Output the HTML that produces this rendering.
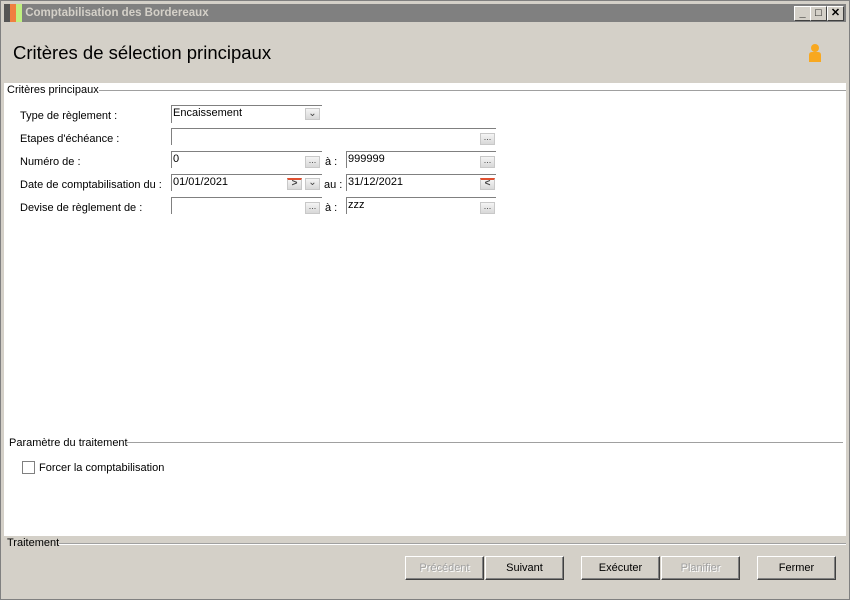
<!DOCTYPE html><html><head><style>
body{margin:0;width:850px;height:600px;background:#d4d0c8;font-family:"Liberation Sans",sans-serif;font-size:11px;position:relative;overflow:hidden}
.a{position:absolute}
.win{left:0;top:0;width:848px;height:598px;border:1px solid #808080;background:#d4d0c8}
.title{left:4px;top:4px;width:842px;height:18px;background:#808080;color:#d4d0c8;font-weight:bold;font-size:11.5px;line-height:18px}
.tb{top:6px;width:15px;height:13px;background:#d4d0c8;border:1px solid;border-color:#fff #404040 #404040 #fff;font-size:11px;line-height:13px;text-align:center;color:#000;font-weight:bold}
.panel{left:4px;top:83px;width:842px;height:453px;background:#fff}
.lbl{font-size:11px;color:#000}
.f{height:17px;background:#fff;border-top:1px solid #808080;border-left:1px solid #808080;line-height:15px;font-size:11px;padding-left:1px;box-sizing:border-box}
.e{width:15px;height:12px;background:linear-gradient(#f4f4f4,#d8d8d8);border:1px solid #c8c8c8;font-size:9px;line-height:6px;text-align:center;color:#444;box-sizing:border-box}
.btn{top:556px;width:79px;height:24px;border:1px solid;border-color:#fff #404040 #404040 #fff;box-shadow:inset -1px -1px #808080;text-align:center;line-height:22px;box-sizing:border-box;font-size:11px}
.dis{color:#a0a0a0;text-shadow:1px 1px #fff}
.line{height:1px;background:#a0a0a0;border-bottom:1px solid #fff}
</style></head><body>
<div class="a win"></div>
<div class="a title"><span style="display:inline-block;width:18px;height:18px;vertical-align:top;background:linear-gradient(90deg,#555 0 6px,#f08040 6px 12px,#c0f080 12px);"></span> Comptabilisation des Bordereaux</div>
<div class="a tb" style="left:794px">_</div>
<div class="a tb" style="left:810px">□</div>
<div class="a tb" style="left:827px">✕</div>
<div class="a" style="left:13px;top:42px;font-size:18.5px">Critères de sélection principaux</div>
<svg class="a" style="left:806px;top:43px" width="18" height="22"><circle cx="9" cy="5" r="4" fill="#f8a820"/><path d="M3 19 V12 Q3 9 6 9 H12 Q15 9 15 12 V19 Z" fill="#f8a820"/></svg>
<div class="a panel"></div>
<div class="a lbl" style="left:7px;top:84px">Critères principaux</div>
<div class="a line" style="left:99px;top:90px;width:747px"></div>
<div class="a lbl" style="left:20px;top:110px">Type de règlement :</div>
<div class="a lbl" style="left:20px;top:133px">Etapes d'échéance :</div>
<div class="a lbl" style="left:20px;top:156px">Numéro de :</div>
<div class="a lbl" style="left:20px;top:179px">Date de comptabilisation du :</div>
<div class="a lbl" style="left:20px;top:202px">Devise de règlement de :</div>
<div class="a f" style="left:171px;top:105px;width:151px;height:18px">Encaissement</div>
<div class="a e" style="left:305px;top:108px;line-height:10px;font-size:10px">⌄</div>
<div class="a f" style="left:171px;top:128px;width:325px"></div><div class="a e" style="left:480px;top:133px">...</div>
<div class="a f" style="left:171px;top:151px;width:151px">0</div><div class="a e" style="left:305px;top:156px">...</div>
<div class="a lbl" style="left:325px;top:156px">à :</div>
<div class="a f" style="left:346px;top:151px;width:150px">999999</div><div class="a e" style="left:480px;top:156px">...</div>
<div class="a f" style="left:171px;top:174px;width:151px">01/01/2021</div>
<div class="a e" style="left:287px;top:178px;border-top:2px solid #e05030;font-size:10px;line-height:8px;font-weight:bold">&gt;</div>
<div class="a e" style="left:305px;top:178px;line-height:8px;font-size:10px">⌄</div>
<div class="a lbl" style="left:324px;top:179px">au :</div>
<div class="a f" style="left:346px;top:174px;width:150px">31/12/2021</div>
<div class="a e" style="left:480px;top:178px;border-top:2px solid #e05030;font-size:10px;line-height:8px;font-weight:bold">&lt;</div>
<div class="a f" style="left:171px;top:197px;width:151px"></div><div class="a e" style="left:305px;top:202px">...</div>
<div class="a lbl" style="left:325px;top:202px">à :</div>
<div class="a f" style="left:346px;top:197px;width:150px">zzz</div><div class="a e" style="left:480px;top:202px">...</div>
<div class="a lbl" style="left:9px;top:437px">Paramètre du traitement</div>
<div class="a line" style="left:127px;top:442px;width:716px"></div>
<div class="a" style="left:22px;top:461px;width:11px;height:11px;border:1px solid #808080;background:#fff"></div>
<div class="a lbl" style="left:39px;top:462px">Forcer la comptabilisation</div>
<div class="a lbl" style="left:7px;top:537px">Traitement</div>
<div class="a line" style="left:59px;top:543px;width:787px"></div>
<div class="a btn dis" style="left:405px">Précédent</div>
<div class="a btn" style="left:485px">Suivant</div>
<div class="a btn" style="left:581px">Exécuter</div>
<div class="a btn dis" style="left:661px">Planifier</div>
<div class="a btn" style="left:757px">Fermer</div>
</body></html>
